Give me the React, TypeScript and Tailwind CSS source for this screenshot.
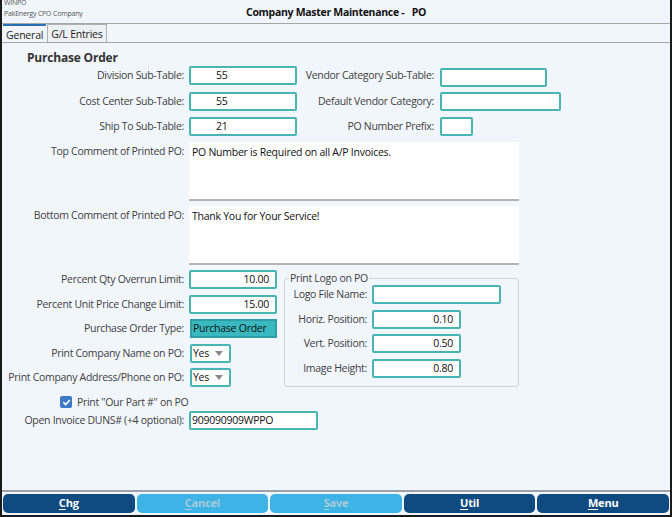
import React from "react";

const font = { fontFamily: '"Open Sans", "Noto Sans", Arial, sans-serif' };

function Label({ children, w = "w-[182px]" }: { children: React.ReactNode; w?: string }) {
  return <div className={`${w} shrink-0 text-right text-[10.5px] tracking-[-0.3px] text-[#404040] leading-[19px] whitespace-nowrap`}>{children}</div>;
}

function Box({ w, value = "", align = "left", pl = "pl-[1px]" }: { w: string; value?: string; align?: "left" | "right"; pl?: string }) {
  return (
    <div
      className={`${w} h-[19px] shrink-0 bg-white border-2 border-[#48b5b2] rounded-[2px] text-[10.5px] tracking-[-0.25px] leading-[15px] text-[#111] ${
        align === "right" ? "text-right pr-[6px]" : pl
      }`}
    >
      {value}
    </div>
  );
}

function Select({ value }: { value: string }) {
  return (
    <div className="w-[41px] h-[19px] shrink-0 bg-white border-2 border-[#48b5b2] rounded-[2px] flex items-center justify-between pl-[1px] pr-[6px]">
      <span className="text-[10.5px] tracking-[-0.25px] leading-[15px] text-[#111]">{value}</span>
      <svg width="8" height="5" viewBox="0 0 8 5">
        <path d="M0 0 L8 0 L4 5 Z" fill="#8a8a8a" />
      </svg>
    </div>
  );
}

function Btn({ label, dark }: { label: string; dark: boolean }) {
  const first = label[0];
  const rest = label.slice(1);
  return (
    <div
      className={`flex-1 h-[19px] rounded-[5px] flex items-center justify-center text-[11px] tracking-[-0.2px] font-bold ${
        dark ? "bg-[#0f4b80] text-white" : "bg-[#3eb4e6] text-[#a9cadb]"
      }`}
    >
      <span>
        <span className="underline underline-offset-2">{first}</span>
        {rest}
      </span>
    </div>
  );
}

export default function App() {
  return (
    <div style={font} className="w-[672px] h-[517px] bg-[#f1f6fc] border-l-2 border-r-2 border-b-2 border-[#1b1b1b] flex flex-col overflow-hidden">
      {/* header */}
      <div className="h-[24px] grid grid-cols-[1fr_auto_1fr] items-start border-b border-[#a6a6a6]">
        <div className="pl-[2px] leading-none">
          <div className="text-[7px] tracking-[-0.2px] text-[#555] leading-[8px] -mt-[1px]">WINPO</div>
          <div className="text-[7px] tracking-[-0.2px] text-[#555] leading-[9px] mt-[2px]">PakEnergy CPO Company</div>
        </div>
        <div className="text-[10.5px] tracking-[-0.3px] font-bold text-[#111] pt-[5px] whitespace-pre">Company Master Maintenance -   PO</div>
        <div />
      </div>
      {/* tabs */}
      <div className="h-[19px] flex items-end pl-[1px] border-b border-[#a6a6a6]">
        <div className="h-[18px] px-[3px] border-t-2 border-[#2a6fb7] text-[10.5px] tracking-[-0.2px] leading-[18px] text-[#222] bg-[#f1f6fc]">General</div>
        <div className="h-[18px] ml-[1px] px-[3px] border border-b-0 border-[#b0b0b0] text-[10.5px] tracking-[-0.2px] leading-[19px] text-[#222] bg-[#eef1f4]">G/L Entries</div>
      </div>

      {/* body */}
      <div className="flex-1 flex flex-col">
        <div className="pl-[25px] pt-[7px] h-[23px] text-[12px] tracking-[-0.2px] font-bold text-[#333] leading-[16px]">Purchase Order</div>

        <div className="flex items-center h-[19px]">
          <Label>Division Sub-Table:</Label>
          <div className="ml-[5px]"><Box w="w-[108px]" value="55" pl="pl-[25px]" /></div>
          <Label w="w-[137px]">Vendor Category Sub-Table:</Label>
          <div className="ml-[6px] mt-[3px]"><Box w="w-[107px]" /></div>
        </div>
        <div className="flex items-center h-[19px] mt-[7px]">
          <Label>Cost Center Sub-Table:</Label>
          <div className="ml-[5px]"><Box w="w-[108px]" value="55" pl="pl-[25px]" /></div>
          <Label w="w-[137px]">Default Vendor Category:</Label>
          <div className="ml-[6px]"><Box w="w-[121px]" /></div>
        </div>
        <div className="flex items-center h-[19px] mt-[6px]">
          <Label>Ship To Sub-Table:</Label>
          <div className="ml-[5px]"><Box w="w-[108px]" value="21" pl="pl-[25px]" /></div>
          <Label w="w-[137px]">PO Number Prefix:</Label>
          <div className="ml-[6px]"><Box w="w-[33px]" /></div>
        </div>

        <div className="flex items-start mt-[6px]">
          <Label>Top Comment of Printed PO:</Label>
          <div className="ml-[5px] w-[330px] h-[59px] bg-white border-b-2 border-[#b4b4b4] text-[10.5px] tracking-[-0.25px] leading-[15px] text-[#111] pl-[3px] pt-[3px]">
            PO Number is Required on all A/P Invoices.
          </div>
        </div>
        <div className="flex items-start mt-[5px]">
          <Label>Bottom Comment of Printed PO:</Label>
          <div className="ml-[5px] w-[330px] h-[59px] bg-white border-b-2 border-[#b4b4b4] text-[10.5px] tracking-[-0.25px] leading-[15px] text-[#111] pl-[3px] pt-[3px]">
            Thank You for Your Service!
          </div>
        </div>

        <div className="flex items-start mt-[5px]">
          <div className="flex flex-col">
            <div className="flex items-center h-[19px]">
              <Label>Percent Qty Overrun Limit:</Label>
              <div className="ml-[5px]"><Box w="w-[88px]" value="10.00" align="right" /></div>
            </div>
            <div className="flex items-center h-[19px] mt-[6px]">
              <Label>Percent Unit Price Change Limit:</Label>
              <div className="ml-[5px]"><Box w="w-[88px]" value="15.00" align="right" /></div>
            </div>
            <div className="flex items-center h-[19px] mt-[5px]">
              <Label>Purchase Order Type:</Label>
              <div className="ml-[6px] w-[87px] h-[19px] bg-[#3ab8bf] border-2 border-[#2f9ea6] text-[10.5px] tracking-[-0.25px] leading-[15px] text-[#111] pl-[1px]">Purchase Order</div>
            </div>
            <div className="flex items-center h-[19px] mt-[6px]">
              <Label>Print Company Name on PO:</Label>
              <div className="ml-[6px]"><Select value="Yes" /></div>
            </div>
            <div className="flex items-center h-[19px] mt-[5px]">
              <Label>Print Company Address/Phone on PO:</Label>
              <div className="ml-[6px]"><Select value="Yes" /></div>
            </div>
          </div>

          <div className="relative ml-[7px] mt-[8px] w-[235px] h-[109px] border border-[#cfd5db] rounded-[3px]">
            <div className="absolute -top-[8px] left-[4px] px-[1px] bg-[#f1f6fc] text-[10.5px] tracking-[-0.3px] leading-[14px] text-[#404040]">Print Logo on PO</div>
            <div className="flex flex-col pt-[6px]">
              <div className="flex items-center h-[19px]">
                <Label w="w-[82px]">Logo File Name:</Label>
                <div className="ml-[5px]"><Box w="w-[129px]" /></div>
              </div>
              <div className="flex items-center h-[19px] mt-[6px]">
                <Label w="w-[82px]">Horiz. Position:</Label>
                <div className="ml-[5px]"><Box w="w-[89px]" value="0.10" align="right" /></div>
              </div>
              <div className="flex items-center h-[19px] mt-[5px]">
                <Label w="w-[82px]">Vert. Position:</Label>
                <div className="ml-[5px]"><Box w="w-[89px]" value="0.50" align="right" /></div>
              </div>
              <div className="flex items-center h-[19px] mt-[6px]">
                <Label w="w-[82px]">Image Height:</Label>
                <div className="ml-[5px]"><Box w="w-[89px]" value="0.80" align="right" /></div>
              </div>
            </div>
          </div>
        </div>

        <div className="flex items-center h-[14px] mt-[8px] pl-[58px]">
          <div className="w-[12px] h-[12px] rounded-[2px] bg-[#3d79c4] flex items-center justify-center">
            <svg width="9" height="9" viewBox="0 0 10 10">
              <path d="M2 5.2 L4.2 7.3 L8.2 2.8" stroke="white" strokeWidth="1.8" fill="none" strokeLinecap="round" strokeLinejoin="round" />
            </svg>
          </div>
          <span className="ml-[5px] text-[10.5px] tracking-[-0.3px] text-[#404040] leading-[14px]">Print "Our Part #" on PO</span>
        </div>
        <div className="flex items-center h-[19px] mt-[2px]">
          <Label>Open Invoice DUNS# (+4 optional):</Label>
          <div className="ml-[5px]"><Box w="w-[129px]" value="909090909WPPO" /></div>
        </div>
      </div>

      {/* bottom bar */}
      <div className="border-t-2 border-[#9da3a8] pt-[2px] pb-[2px] px-[1px] flex gap-[2px]">
        <Btn label="Chg" dark />
        <Btn label="Cancel" dark={false} />
        <Btn label="Save" dark={false} />
        <Btn label="Util" dark />
        <Btn label="Menu" dark />
      </div>
    </div>
  );
}
